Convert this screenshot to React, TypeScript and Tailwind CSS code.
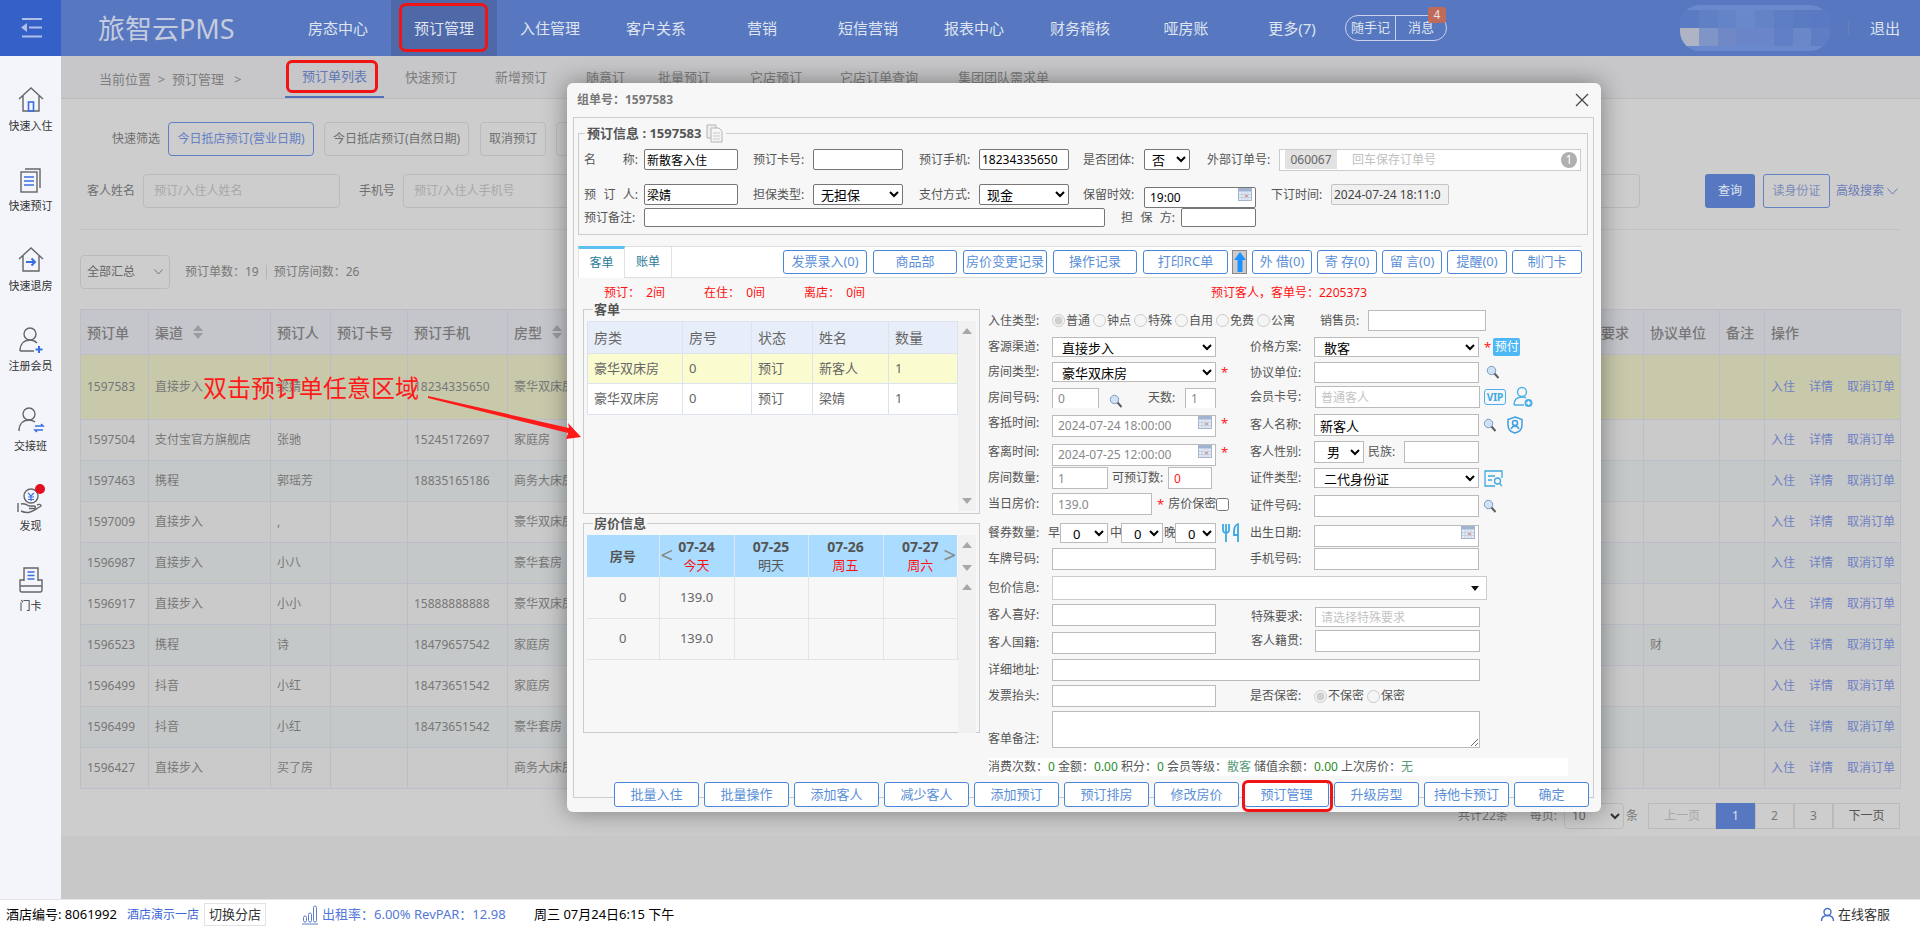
import React from "react";

const FONT = '"Noto Sans", "Noto Sans CJK SC", sans-serif';

const navItems = ["房态中心", "预订管理", "入住管理", "客户关系", "营销", "短信营销", "报表中心", "财务稽核", "哑房账", "更多(7)"];

const rows = [
  ["1597583", "直接步入", "梁婧", "", "18234335650", "豪华双床房", ""],
  ["1597504", "支付宝官方旗舰店", "张驰", "", "15245172697", "家庭房", ""],
  ["1597463", "携程", "郭瑶芳", "", "18835165186", "商务大床房", ""],
  ["1597009", "直接步入", ",", "", "", "豪华双床房", ""],
  ["1596987", "直接步入", "小八", "", "", "豪华套房", ""],
  ["1596917", "直接步入", "小小", "", "15888888888", "豪华双床房", ""],
  ["1596523", "携程", "诗", "", "18479657542", "家庭房", "财"],
  ["1596499", "抖音", "小红", "", "18473651542", "家庭房", ""],
  ["1596499", "抖音", "小红", "", "18473651542", "豪华套房", ""],
  ["1596427", "直接步入", "买了房", "", "", "商务大床房", ""],
];

const topInput = "min-w-0 h-full border border-[#767676] rounded-[2px] bg-white px-[2px] text-[12px] text-black outline-none";
const topSelect = "h-full border border-[#767676] rounded-[2px] bg-white pl-[3px] text-[13px] text-black";
const formInput = "min-w-0 h-full border border-[#bbbbbb] bg-white px-[5px] text-[12px] text-[#888888] outline-none placeholder:text-[#c4c4c4]";
const formSelect = "h-full border border-[#bbbbbb] bg-white pl-[5px] text-[13px] text-black";
const blueBtn = "flex items-center justify-center h-full border border-[#4a86d8] rounded-[3px] bg-white text-[13px] text-[#5a8fd8] whitespace-nowrap";

const Lbl = ({ t, c }: { t: string; c: string }) => (
  <span className={`flex justify-between shrink-0 whitespace-nowrap text-[12px] text-[#555555] ${c}`}>
    {t.split(" ").map((p, i) => (
      <span key={i}>{p}</span>
    ))}
  </span>
);

const Star = () => <span className="ml-[5px] text-[13px] leading-none text-[#ff2020]">*</span>;

const Calendar = () => (
  <svg width="14" height="13" viewBox="0 0 14 13" className="absolute right-[4px] top-[4px]">
    <rect x="0.5" y="0.5" width="13" height="12" fill="#e6ecf5" stroke="#a8b6cc" />
    <rect x="0.5" y="0.5" width="13" height="3" fill="#9fb2d0" />
    <path d="M1 6.5h12M1 9.5h12M4 4v8M7 4v8M10 4v8" stroke="#c3cfe0" />
    <rect x="7" y="7" width="3" height="2" fill="#d9a0a0" />
  </svg>
);

const Search = ({ c = "" }: { c?: string }) => (
  <svg width="14" height="15" viewBox="0 0 14 15" className={`shrink-0 ${c}`}>
    <circle cx="5.5" cy="5.5" r="4.2" fill="#cfe2f5" stroke="#7d9cc4" />
    <path d="M8.5 8.5 12.5 13" stroke="#5c5c5c" strokeWidth="2" />
  </svg>
);

const Tri = ({ up }: { up?: boolean }) => (
  <svg width="10" height="6" viewBox="0 0 10 6">
    <path d={up ? "M0 6 5 0l5 6z" : "M0 0l5 6 5-6z"} fill="#a8a8a8" />
  </svg>
);

const Sort = () => (
  <svg width="10" height="14" viewBox="0 0 10 14" className="ml-[10px]">
    <path d="M0 6 5 0l5 6zM0 8l5 6 5-6z" fill="#9a9aa0" />
  </svg>
);

const Radios = ({ items, c }: { items: { t: string; on?: boolean }[]; c: string }) => (
  <div className={`flex items-center ${c}`}>
    {items.map((r) => (
      <label key={r.t} className="flex items-center w-[41px] text-[12px] text-[#555555] whitespace-nowrap">
        <input type="radio" disabled defaultChecked={r.on} name={r.t} className="shrink-0 mr-[1px]" />
        {r.t}
      </label>
    ))}
  </div>
);

const sideIcons = [
  <svg key="a" width="30" height="30" viewBox="0 0 30 30" fill="none" stroke="#666" strokeWidth="1.4">
    <path d="M3 14 15 3l12 11M7 11v15h16V11" />
    <rect x="12.5" y="17" width="5" height="9" stroke="#3a6fe0" strokeWidth="1.6" />
  </svg>,
  <svg key="b" width="30" height="30" viewBox="0 0 30 30" fill="none" stroke="#666" strokeWidth="1.4">
    <path d="M9 4h15v19" />
    <rect x="5" y="7" width="16" height="20" />
    <path d="M8 12h10M8 16h10M8 20h10" stroke="#3a6fe0" strokeWidth="1.6" />
  </svg>,
  <svg key="c" width="30" height="30" viewBox="0 0 30 30" fill="none" stroke="#666" strokeWidth="1.4">
    <path d="M3 14 15 3l12 11M7 11v15h16V11" />
    <path d="M10 17h9M15.5 13.5 19 17l-3.500 3.500" stroke="#3a6fe0" strokeWidth="2" />
  </svg>,
  <svg key="d" width="32" height="30" viewBox="0 0 32 30" fill="none" stroke="#666" strokeWidth="1.4">
    <circle cx="15" cy="9" r="6" />
    <path d="M5 26c0-7 4-11 10-11 3 0 5 1 7 3M5 26h14" />
    <path d="M24 21v7M20.500 24.500h7" stroke="#3a6fe0" strokeWidth="2" />
  </svg>,
  <svg key="e" width="32" height="30" viewBox="0 0 32 30" fill="none" stroke="#666" strokeWidth="1.4">
    <circle cx="14" cy="9" r="6" />
    <path d="M4 26c0-7 4-11 10-11 2 0 4 .5 6 2" />
    <path d="M20 21h8l-2-2M28 25h-8l2 2" stroke="#3a6fe0" strokeWidth="1.6" />
  </svg>,
  <svg key="f" width="32" height="32" viewBox="0 0 32 32" fill="none" stroke="#666" strokeWidth="1.4">
    <circle cx="16" cy="12" r="7" />
    <path d="M13 9l3 3 3-3M16 12v5M13 13h6M13 15.500h6" stroke="#3a6fe0" strokeWidth="1.2" />
    <path d="M3 19v9M6 20c3-1 5 0 8 2h5c2 0 2 2.500 0 2.500h-5M6 27c6 3 10 2 20-5 0-2-2-2-4-1" />
    <circle cx="25" cy="5" r="5" fill="#e01020" stroke="none" />
  </svg>,
  <svg key="g" width="30" height="30" viewBox="0 0 30 30" fill="none" stroke="#666" strokeWidth="1.4">
    <path d="M8 16V3h14v13" />
    <path d="M11.500 7h7M11.500 10.500h7M11.500 14h7" stroke="#3a6fe0" strokeWidth="1.6" />
    <path d="M8 15H4v10a2 2 0 0 0 2 2h18a2 2 0 0 0 2-2V15h-4M4 21h22" />
  </svg>,
];

const sideLabels = ["快速入住", "快速预订", "快速退房", "注册会员", "交接班", "发现", "门卡"];

const tiles = ["#5a7bc3", "#5f80c4", "#6484c8", "#6888c9", "#6383c6", "#5d7ec5", "#5a7bc2", "#597ac2",
  "#aeb4c4", "#7f95c8", "#7089c6", "#6b86c8", "#6a86c9", "#607fc6", "#6a88c8", "#5e7dc4"];

export default function App() {
  return (
    <div className="relative flex flex-col h-[929px] w-[1920px] overflow-hidden bg-white" style={{ fontFamily: FONT }}>
      {/* header */}
      <header className="flex items-center h-[56px] shrink-0 bg-[#5778c0]">
        <div className="flex items-center justify-center w-[61px] h-full bg-[#3560c8]">
          <svg width="22" height="20" viewBox="0 0 22 20" fill="none">
            <path d="M2 1h20M9 9.500h13M2 18.500h20" stroke="#aebfe6" strokeWidth="2" />
            <path d="M7 5v9L1 9.500z" fill="#aebfe6" />
          </svg>
        </div>
        <div className="w-[224px] pl-[37px] text-[27px] leading-none text-[#c4cbde] whitespace-nowrap">旅智云PMS</div>
        <nav className="flex h-full">
          {navItems.map((n) => (
            <div
              key={n}
              className={`flex items-center justify-center w-[106px] h-full text-[15px] text-[#dfe4ef] ${n === "预订管理" ? "bg-[#4f68a8]" : ""}`}
            >
              {n}
            </div>
          ))}
        </nav>
        <div className="relative flex items-center h-[26px] w-[102px] border border-[#c8d2ea] rounded-[13px] text-[13px] text-[#dfe4ef]">
          <span className="flex items-center justify-center w-[50px] h-full border-r border-[#c8d2ea]">随手记</span>
          <span className="flex items-center justify-center flex-1">消息</span>
          <span className="absolute right-[0px] top-[-9px] flex items-center justify-center w-[18px] h-[16px] rounded-[3px] bg-[#c06a5a] text-[12px] leading-none text-[#e4e4e4]">4</span>
        </div>
        <div className="ml-[233px] grid grid-cols-8 w-[150px] h-[46px] overflow-hidden rounded-[20px] bg-[#6a88cc] content-center">
          {tiles.map((t, i) => (
            <div key={i} className="h-[18px]" style={{ backgroundColor: t }} />
          ))}
        </div>
        <div className="ml-[18px] w-[1px] h-[14px] bg-[#6a7fb4]" />
        <div className="ml-[21px] text-[15px] text-[#dfe4ef]">退出</div>
      </header>

      <div className="flex flex-1 min-h-0">
        {/* sidebar */}
        <aside className="flex flex-col items-center w-[61px] shrink-0 pt-[30px] bg-[#f3f5fa]">
          {sideLabels.map((s, i) => (
            <div key={s} className="flex flex-col items-center h-[80px]">
              <div className="flex items-center justify-center h-[28px]">{sideIcons[i]}</div>
              <div className="mt-[4px] text-[11px] leading-[16px] text-[#333333] whitespace-nowrap">{s}</div>
            </div>
          ))}
        </aside>

        {/* dimmed page under the dialog */}
        <main className="flex flex-col flex-1 min-w-0 bg-[#cdcdcd]">
          <div className="flex items-center h-[43px] shrink-0 border-b border-[#bcbcbc] bg-[#c7c7c9] text-[13px] text-[#7d7d7d]">
            <span className="ml-[38px] mt-[6px] w-[186px] whitespace-pre">当前位置  &gt;  预订管理   &gt;</span>
            <span className="relative flex items-center justify-center w-[99px] h-full pt-[2px] border-b-2 border-[#5470b8] text-[#5f78b8]">
              预订单列表
              <span className="absolute left-[1px] top-[4px] w-[92px] h-[33px] border-[3px] border-[#f01414] rounded-[6px]" />
            </span>
            <span className="ml-[21px] mt-[2px]">快速预订</span>
            <span className="ml-[38px] mt-[2px]">新增预订</span>
            <span className="ml-[39px] mt-[2px]">随意订</span>
            <span className="ml-[33px] mt-[2px]">批量预订</span>
            <span className="ml-[40px] mt-[2px]">它店预订</span>
            <span className="ml-[38px] mt-[2px]">它店订单查询</span>
            <span className="ml-[40px] mt-[2px]">集团团队需求单</span>
          </div>

          <div className="flex flex-col flex-1 min-h-0 pl-[19px] pr-[20px]">
            <div className="flex items-center h-[34px] mt-[23px] text-[12px] text-[#6f6f6f] shrink-0">
              <span className="ml-[32px] w-[56px]">快速筛选</span>
              <span className="flex items-center justify-center w-[146px] h-full border border-[#5f7fc4] rounded-[4px] text-[#6480c4]">今日抵店预订(营业日期)</span>
              <span className="flex items-center justify-center w-[145px] h-full ml-[10px] border border-[#bbbbbb] rounded-[4px]">今日抵店预订(自然日期)</span>
              <span className="flex items-center justify-center w-[66px] h-full ml-[11px] border border-[#bbbbbb] rounded-[4px]">取消预订</span>
              <span className="w-[66px] h-full ml-[10px] border border-[#bbbbbb] rounded-[4px]" />
            </div>

            <div className="flex items-center h-[34px] mt-[18px] text-[12px] text-[#6f6f6f] shrink-0">
              <span className="ml-[7px] w-[56px]">客人姓名</span>
              <span className="flex items-center w-[197px] h-full pl-[10px] border border-[#bbbbbb] rounded-[4px] text-[#a8a8a8]">预订/入住人姓名</span>
              <span className="ml-[19px] w-[44px]">手机号</span>
              <span className="flex items-center w-[1237px] h-full pl-[10px] border border-[#bbbbbb] rounded-[4px] text-[#a8a8a8]">预订/入住人手机号</span>
              <span className="flex items-center justify-center w-[50px] h-full ml-[65px] rounded-[3px] bg-[#5778c0] text-[#dfe4ef]">查询</span>
              <span className="flex items-center justify-center w-[67px] h-full ml-[8px] border border-[#6482c4] rounded-[3px] text-[#7a8cb8]">读身份证</span>
              <span className="ml-[6px] whitespace-nowrap text-[#6a7cb4]">高级搜索</span>
              <svg width="11" height="7" viewBox="0 0 11 7" fill="none" className="ml-[3px]">
                <path d="M.5.500 5.500 6l5-5.500" stroke="#6a7cb4" />
              </svg>
            </div>

            <div className="h-[1px] mt-[21px] bg-[#c2c2c2] shrink-0" />

            <div className="flex items-center h-[34px] mt-[25px] text-[12px] text-[#777777] shrink-0">
              <span className="flex items-center justify-between w-[90px] h-full px-[6px] border border-[#bbbbbb] rounded-[4px] text-[#666666]">
                全部汇总
                <svg width="9" height="6" viewBox="0 0 9 6" fill="none">
                  <path d="M.5.500 4.500 5l4-4.500" stroke="#777" />
                </svg>
              </span>
              <span className="ml-[15px]">预订单数：19</span>
              <span className="mx-[7px] h-[14px] w-[1px] bg-[#b5b5b5]" />
              <span>预订房间数：26</span>
            </div>

            <table className="mt-[20px] w-[1820px] table-fixed border-collapse text-[12px] text-[#777777] shrink-0">
              <colgroup>
                <col className="w-[68px]" />
                <col className="w-[122px]" />
                <col className="w-[60px]" />
                <col className="w-[77px]" />
                <col className="w-[100px]" />
                <col className="w-[113px]" />
                <col className="w-[950px]" />
                <col className="w-[73px]" />
                <col className="w-[76px]" />
                <col className="w-[45px]" />
                <col className="w-[136px]" />
              </colgroup>
              <thead>
                <tr className="h-[45px] bg-[#c5c6cb] text-[14px] font-medium text-left">
                  <th className="border border-[#bcbdc8] pl-[6px] font-medium">预订单</th>
                  <th className="border border-[#bcbdc8] pl-[6px] font-medium"><span className="flex items-center">渠道<Sort /></span></th>
                  <th className="border border-[#bcbdc8] pl-[6px] font-medium">预订人</th>
                  <th className="border border-[#bcbdc8] pl-[6px] font-medium">预订卡号</th>
                  <th className="border border-[#bcbdc8] pl-[6px] font-medium">预订手机</th>
                  <th className="border border-[#bcbdc8] pl-[6px] font-medium"><span className="flex items-center">房型<Sort /></span></th>
                  <th className="border border-[#bcbdc8]" />
                  <th className="border border-[#bcbdc8] pl-[2px] font-medium">特殊要求</th>
                  <th className="border border-[#bcbdc8] pl-[6px] font-medium">协议单位</th>
                  <th className="border border-[#bcbdc8] pl-[6px] font-medium">备注</th>
                  <th className="border border-[#bcbdc8] pl-[6px] font-medium">操作</th>
                </tr>
              </thead>
              <tbody>
                {rows.map((r, i) => (
                  <tr
                    key={i}
                    className={i === 0 ? "h-[65px] bg-[#c8c9ab]" : i % 2 === 0 ? "h-[41px] bg-[#c4c8c8]" : "h-[41px] bg-[#cbcaca]"}
                  >
                    {r.slice(0, 6).map((c, j) => (
                      <td key={j} className="border border-[#bcbdc8] pl-[6px] whitespace-nowrap overflow-hidden">{c}</td>
                    ))}
                    <td className="border border-[#bcbdc8]" />
                    <td className="border border-[#bcbdc8]" />
                    <td className="border border-[#bcbdc8] pl-[6px]">{r[6]}</td>
                    <td className="border border-[#bcbdc8]" />
                    <td className="border border-[#bcbdc8] pl-[6px] text-[#6f80c4]">
                      <span className="flex gap-[14px] whitespace-nowrap">
                        <span>入住</span>
                        <span>详情</span>
                        <span>取消订单</span>
                      </span>
                    </td>
                  </tr>
                ))}
              </tbody>
            </table>

            <div className="flex items-center justify-end h-[26px] mt-[14px] text-[12px] text-[#777777] shrink-0">
              <span className="mr-[22px]">共计22条</span>
              <span className="mr-[7px]">每页:</span>
              <span className="flex items-center justify-between w-[60px] h-full pl-[7px] pr-[3px] border border-[#bbbbbb] rounded-[3px] text-[#666666]">
                10
                <svg width="10" height="7" viewBox="0 0 10 7" fill="none">
                  <path d="M1 1l4 4 4-4" stroke="#333" strokeWidth="2" />
                </svg>
              </span>
              <span className="ml-[2px] mr-[10px]">条</span>
              <span className="flex items-center justify-center w-[68px] h-full border border-[#bbbbbb] text-[#a8a8a8]">上一页</span>
              <span className="flex items-center justify-center w-[39px] h-full bg-[#5778c0] text-[#dfe4ef]">1</span>
              <span className="flex items-center justify-center w-[39px] h-full border border-[#bbbbbb]">2</span>
              <span className="flex items-center justify-center w-[39px] h-full border border-[#bbbbbb]">3</span>
              <span className="flex items-center justify-center w-[67px] h-full border border-[#bbbbbb] text-[#555555]">下一页</span>
            </div>
          </div>
          <div className="h-[63px] shrink-0 bg-[#c8c8c8]" />
        </main>
      </div>

      {/* footer */}
      <footer className="flex items-center h-[30px] shrink-0 border-t border-[#e4e4e4] bg-white pl-[6px] text-[13px] text-black">
        <span className="w-[121px] whitespace-nowrap">酒店编号: 8061992</span>
        <span className="w-[77px] whitespace-nowrap text-[12px] text-[#3f66d8]">酒店演示一店</span>
        <span className="flex items-center justify-center w-[62px] h-[23px] border border-[#e2e2e2] text-[#333333]">切换分店</span>
        <svg width="16" height="20" viewBox="0 0 16 20" fill="none" stroke="#5b7fc8" className="ml-[36px]">
          <rect x="1.500" y="11" width="3" height="6" rx="1.500" />
          <rect x="6.500" y="8" width="3" height="9" rx="1.500" />
          <rect x="11.500" y="1" width="3" height="16" rx="1.500" />
          <path d="M0 19h16" />
        </svg>
        <span className="ml-[4px] w-[212px] whitespace-nowrap text-[#5578d8]">出租率：6.00% RevPAR：12.98</span>
        <span className="whitespace-nowrap">周三 07月24日6:15 下午</span>
        <span className="ml-auto mr-[30px] flex items-center gap-[3px] text-[#333333]">
          <svg width="15" height="15" viewBox="0 0 15 15" fill="none" stroke="#4a6fc8" strokeWidth="1.400">
            <circle cx="7.500" cy="5" r="3.500" />
            <path d="M1.500 14c0-3.500 2.500-5.500 6-5.500s6 2 6 5.500" />
          </svg>
          在线客服
        </span>
      </footer>

      {/* annotation on the list */}
      <div className="absolute left-[203px] top-[372px] text-[24px] leading-[32px] text-[#ff1a1a] whitespace-nowrap z-20">双击预订单任意区域</div>

      {/* reservation dialog */}
      <section className="absolute left-[567px] top-[83px] z-10 flex flex-col w-[1034px] h-[729px] rounded-[6px] bg-[#f7f7f7] shadow-[0_0_24px_rgba(0,0,0,0.4)]">
        <div className="flex items-center justify-between h-[34px] shrink-0 pl-[10px] pr-[12px] text-[12px] font-bold text-[#777777]">
          <span>组单号：1597583</span>
          <svg width="14" height="14" viewBox="0 0 14 14" fill="none" stroke="#444" strokeWidth="1.200">
            <path d="M1 1l12 12M13 1 1 13" />
          </svg>
        </div>

        <div className="flex flex-col ml-[6px] w-[1021px] h-[681px] shrink-0 border border-[#cccccc]">
          <fieldset className="ml-[4px] mt-[7px] w-[1010px] h-[110px] shrink-0 border border-[#cccccc] pl-[5px]">
            <legend className="flex items-center ml-[1px] px-[2px] h-[16px] text-[13px] font-bold leading-[16px] text-[#555555]">
              预订信息 : 1597583
              <svg width="18" height="19" viewBox="0 0 18 19" fill="none" stroke="#b5b5b5" className="ml-[5px]">
                <path d="M1 1h9v13H1z" fill="#eeeeee" />
                <path d="M5 4h8l3 3v11H5z" fill="#f5f5f5" />
                <path d="M7 9h7M7 12h7M7 15h7" stroke="#c9c9c9" />
              </svg>
            </legend>

            <div className="flex items-center h-[21px] mt-[8px]">
              <Lbl t="名 称:" c="w-[54px]" />
              <input defaultValue="新散客入住" className={`${topInput} ml-[6px] w-[94px]`} />
              <Lbl t="预订卡号:" c="ml-[15px] w-[54px]" />
              <input className={`${topInput} ml-[6px] w-[90px]`} />
              <Lbl t="预订手机:" c="ml-[16px] w-[54px]" />
              <input defaultValue="18234335650" className={`${topInput} ml-[6px] w-[90px]`} />
              <Lbl t="是否团体:" c="ml-[14px] w-[54px]" />
              <select className={`${topSelect} ml-[7px] w-[46px]`} defaultValue="否">
                <option>否</option>
              </select>
              <Lbl t="外部订单号:" c="ml-[17px] w-[66px]" />
              <div className="flex items-center relative ml-[6px] w-[302px] h-[22px] border border-[#cccccc] bg-white pl-[5px] text-[12px]">
                <span className="flex items-center justify-center w-[52px] h-[19px] bg-[#e2e2e2] text-[#666666]">060067</span>
                <span className="ml-[15px] text-[#c0c0c0]">回车保存订单号</span>
                <span className="absolute right-[3px] top-[2px] flex items-center justify-center w-[16px] h-[16px] rounded-full bg-[#b0b0b0] text-white">1</span>
              </div>
            </div>

            <div className="flex items-center h-[21px] mt-[14px]">
              <Lbl t="预 订 人:" c="w-[54px]" />
              <input defaultValue="梁婧" className={`${topInput} ml-[6px] w-[94px]`} />
              <Lbl t="担保类型:" c="ml-[15px] w-[54px]" />
              <select className={`${topSelect} ml-[6px] w-[90px]`} defaultValue="无担保">
                <option>无担保</option>
              </select>
              <Lbl t="支付方式:" c="ml-[16px] w-[54px]" />
              <select className={`${topSelect} ml-[6px] w-[90px]`} defaultValue="现金">
                <option>现金</option>
              </select>
              <Lbl t="保留时效:" c="ml-[14px] w-[54px]" />
              <div className="relative ml-[7px] w-[112px] h-full">
                <input defaultValue="19:00" className={`${topInput} w-full px-[5px]`} />
                <Calendar />
              </div>
              <Lbl t="下订时间:" c="ml-[15px] w-[54px]" />
              <input defaultValue="2024-07-24 18:11:0" className="ml-[6px] w-[118px] h-full min-w-0 border border-[#c4c4c4] rounded-[2px] bg-[#f0f0f0] px-[2px] text-[12px] text-[#444444] outline-none" />
            </div>

            <div className="flex items-center h-[19px] mt-[3px]">
              <Lbl t="预订备注:" c="w-[54px]" />
              <input className={`${topInput} ml-[6px] w-[461px]`} />
              <Lbl t="担 保 方:" c="ml-[16px] w-[54px]" />
              <input className={`${topInput} ml-[6px] w-[75px]`} />
            </div>
          </fieldset>

          {/* tabs and actions */}
          <div className="flex items-center ml-[4px] mt-[11px] w-[1004px] h-[32px] shrink-0 border-y border-[#dddddd] bg-white">
            <span className="flex items-center justify-center w-[47px] h-[32px] border-t-[3px] border-[#5bc0f0] border-x border-x-[#e2e2e2] bg-white text-[12px] text-[#2a7a9a] -mt-[1px]">客单</span>
            <span className="flex items-center justify-center w-[47px] h-full border-r border-[#e2e2e2] text-[12px] text-[#2a7a9a]">账单</span>
            <div className="flex items-center h-[24px] ml-[111px]">
              <span className={`${blueBtn} w-[84px]`}>发票录入(0)</span>
              <span className={`${blueBtn} w-[84px] ml-[6px]`}>商品部</span>
              <span className={`${blueBtn} w-[84px] ml-[6px]`}>房价变更记录</span>
              <span className={`${blueBtn} w-[84px] ml-[6px]`}>操作记录</span>
              <span className={`${blueBtn} w-[85px] ml-[6px]`}>打印RC单</span>
              <span className="flex items-center justify-center w-[15px] h-full ml-[4px] border border-[#888888] bg-[#cccccc]">
                <svg width="12" height="20" viewBox="0 0 12 20">
                  <path d="M6 0l6 8H8.500v12h-5V8H0z" fill="#1e90ff" />
                </svg>
              </span>
              <span className={`${blueBtn} w-[60px] ml-[5px]`}>外 借(0)</span>
              <span className={`${blueBtn} w-[60px] ml-[5px]`}>寄 存(0)</span>
              <span className={`${blueBtn} w-[60px] ml-[5px]`}>留 言(0)</span>
              <span className={`${blueBtn} w-[60px] ml-[5px]`}>提醒(0)</span>
              <span className={`${blueBtn} w-[70px] ml-[5px]`}>制门卡</span>
            </div>
          </div>

          <div className="flex h-[23px] shrink-0 pl-[30px] pt-[7px] text-[12px] leading-[16px] text-[#ff1010] whitespace-pre">
            <span className="w-[100px]">预订：  2间</span>
            <span className="w-[100px]">在住：  0间</span>
            <span className="w-[407px]">离店：  0间</span>
            <span>预订客人，客单号：2205373</span>
          </div>

          <div className="flex flex-1 min-h-0">
            {/* left column */}
            <div className="flex flex-col ml-[9px] w-[396px] shrink-0">
              <fieldset className="flex h-[213px] border border-[#cccccc] pl-[3px] pr-[3px]">
                <legend className="ml-[6px] px-[1px] h-[16px] text-[13px] font-bold leading-[16px] text-[#555555]">客单</legend>
                <div className="flex mt-[4px]">
                  <table className="w-[370px] h-[93px] self-start table-fixed border-collapse text-[13px] text-[#666666]">
                    <colgroup>
                      <col className="w-[95px]" />
                      <col className="w-[69px]" />
                      <col className="w-[61px]" />
                      <col className="w-[76px]" />
                      <col className="w-[69px]" />
                    </colgroup>
                    <thead>
                      <tr className="h-[32px] bg-[#e8eef9] text-left text-[14px]">
                        {["房类", "房号", "状态", "姓名", "数量"].map((h) => (
                          <th key={h} className="border border-[#dde3ee] pl-[6px] font-normal">{h}</th>
                        ))}
                      </tr>
                    </thead>
                    <tbody>
                      <tr className="h-[30px] bg-[#fbfbd0]">
                        {["豪华双床房", "0", "预订", "新客人", "1"].map((c, i) => (
                          <td key={i} className="border border-[#dde3ee] pl-[6px]">{c}</td>
                        ))}
                      </tr>
                      <tr className="h-[31px] bg-white">
                        {["豪华双床房", "0", "预订", "梁婧", "1"].map((c, i) => (
                          <td key={i} className="border border-[#dde3ee] pl-[6px]">{c}</td>
                        ))}
                      </tr>
                    </tbody>
                  </table>
                  <div className="flex flex-col items-center justify-between w-[18px] h-[190px] py-[7px] bg-[#f1f1f1]">
                    <Tri up />
                    <Tri />
                  </div>
                </div>
              </fieldset>

              <fieldset className="flex mt-[1px] h-[218px] border border-[#cccccc] pl-[3px] pr-[3px]">
                <legend className="ml-[6px] px-[1px] h-[16px] text-[13px] font-bold leading-[16px] text-[#555555]">房价信息</legend>
                <div className="flex mt-[4px]">
                  <table className="w-[370px] h-[123px] self-start table-fixed border-collapse text-[13px] text-[#666666] text-center">
                    <colgroup>
                      <col className="w-[72px]" />
                      <col className="w-[75px]" />
                      <col className="w-[74px]" />
                      <col className="w-[75px]" />
                      <col className="w-[74px]" />
                    </colgroup>
                    <thead>
                      <tr className="h-[42px] bg-[#aadcff] leading-[18px]">
                        <th className="border-r border-[#dfe6ee] text-[#555555]">房号</th>
                        <th className="relative border-r border-[#dfe6ee]">
                          <span className="absolute left-[1px] top-[8px] text-[22px] font-normal leading-none text-[#888888]">&lt;</span>
                          <div className="text-[14px] font-bold text-[#555555]">07-24</div>
                          <div className="font-normal text-[#ff1010]">今天</div>
                        </th>
                        <th className="border-r border-[#dfe6ee]">
                          <div className="text-[14px] font-bold text-[#555555]">07-25</div>
                          <div className="font-normal text-[#555555]">明天</div>
                        </th>
                        <th className="border-r border-[#dfe6ee]">
                          <div className="text-[14px] font-bold text-[#555555]">07-26</div>
                          <div className="font-normal text-[#ff1010]">周五</div>
                        </th>
                        <th className="relative">
                          <div className="text-[14px] font-bold text-[#555555]">07-27</div>
                          <div className="font-normal text-[#ff1010]">周六</div>
                          <span className="absolute right-[1px] top-[8px] text-[22px] font-normal leading-none text-[#888888]">&gt;</span>
                        </th>
                      </tr>
                    </thead>
                    <tbody>
                      {[0, 1].map((i) => (
                        <tr key={i} className="h-[41px]">
                          <td className="border-r border-b border-[#e4e4e4]">0</td>
                          <td className="border-r border-b border-[#e4e4e4]">139.0</td>
                          <td className="border-r border-b border-[#e4e4e4]" />
                          <td className="border-r border-b border-[#e4e4e4]" />
                          <td className="border-r border-b border-[#e4e4e4]" />
                        </tr>
                      ))}
                    </tbody>
                  </table>
                  <div className="flex flex-col items-center w-[18px] h-[198px] bg-[#f1f1f1]">
                    <div className="mt-[7px]"><Tri up /></div>
                    <div className="mt-[17px]"><Tri /></div>
                    <div className="mt-[13px]"><Tri up /></div>
                  </div>
                </div>
              </fieldset>
            </div>

            {/* right column */}
            <div className="flex flex-col ml-[9px] w-[580px] shrink-0">
              <div className="flex items-center h-[21px] mt-[9px]">
                <Lbl t="入住类型:" c="w-[64px]" />
                <Radios
                  c="w-[268px]"
                  items={[{ t: "普通", on: true }, { t: "钟点" }, { t: "特殊" }, { t: "自用" }, { t: "免费" }, { t: "公寓" }]}
                />
                <Lbl t="销售员:" c="w-[48px]" />
                <input className={`${formInput} w-[118px]`} />
              </div>

              <div className="flex mt-[6px]">
                <div className="flex flex-col w-[262px] shrink-0">
                  <div className="flex items-center h-[20px]">
                    <Lbl t="客源渠道:" c="w-[64px]" />
                    <select className={`${formSelect} w-[164px]`} defaultValue="直接步入"><option>直接步入</option></select>
                  </div>
                  <div className="flex items-center h-[20px] mt-[5px]">
                    <Lbl t="房间类型:" c="w-[64px]" />
                    <select className={`${formSelect} w-[164px]`} defaultValue="豪华双床房"><option>豪华双床房</option></select>
                    <Star />
                  </div>
                  <div className="flex items-center h-[20px] mt-[6px]">
                    <Lbl t="房间号码:" c="w-[64px]" />
                    <input defaultValue="0" className={`${formInput} w-[47px] border-b-0`} />
                    <Search c="ml-[10px] mt-[6px]" />
                    <Lbl t="天数:" c="ml-[25px] w-[37px]" />
                    <input defaultValue="1" className={`${formInput} w-[31px] border-b-0`} />
                  </div>
                  <div className="flex items-center h-[22px] mt-[4px]">
                    <Lbl t="客抵时间:" c="w-[64px]" />
                    <div className="relative w-[164px] h-full">
                      <input defaultValue="2024-07-24 18:00:00" className={`${formInput} w-full bg-[#f7f7f7] border-[#999999]`} />
                      <Calendar />
                    </div>
                    <Star />
                  </div>
                  <div className="flex items-center h-[22px] mt-[7px]">
                    <Lbl t="客离时间:" c="w-[64px]" />
                    <div className="relative w-[164px] h-full">
                      <input defaultValue="2024-07-25 12:00:00" className={`${formInput} w-full bg-[#f7f7f7] border-[#999999]`} />
                      <Calendar />
                    </div>
                    <Star />
                  </div>
                  <div className="flex items-center h-[22px] mt-[4px]">
                    <Lbl t="房间数量:" c="w-[64px]" />
                    <input defaultValue="1" className={`${formInput} w-[56px]`} />
                    <Lbl t="可预订数:" c="ml-[4px] w-[56px]" />
                    <input defaultValue="0" className={`${formInput} w-[44px] text-[#ff2020]`} />
                  </div>
                  <div className="flex items-center h-[22px] mt-[4px]">
                    <Lbl t="当日房价:" c="w-[64px]" />
                    <input defaultValue="139.0" className={`${formInput} w-[100px]`} />
                    <Star />
                    <Lbl t="房价保密" c="ml-[4px] w-[48px]" />
                    <input type="checkbox" className="shrink-0" />
                  </div>
                  <div className="flex items-center h-[20px] mt-[8px]">
                    <Lbl t="餐券数量:" c="w-[60px]" />
                    <Lbl t="早" c="w-[12px]" />
                    <select className={`${formSelect} w-[48px] pl-[8px] text-[#000080]`} defaultValue="0"><option>0</option></select>
                    <Lbl t="中" c="ml-[2px] w-[11px]" />
                    <select className={`${formSelect} w-[42px] pl-[8px] text-[#000080]`} defaultValue="0"><option>0</option></select>
                    <Lbl t="晚" c="ml-[1px] w-[11px]" />
                    <select className={`${formSelect} w-[41px] pl-[8px] text-[#000080]`} defaultValue="0"><option>0</option></select>
                    <svg width="18" height="20" viewBox="0 0 18 20" fill="none" stroke="#3fa8e0" strokeWidth="1.800" className="ml-[6px] shrink-0">
                      <path d="M1 1v6c0 2 2 3 3 3s3-1 3-3V1M4 1v18" />
                      <path d="M16 1c-3 1-4 4-4 8v3h4zM16 1v18" />
                    </svg>
                  </div>
                  <div className="flex items-center h-[22px] mt-[5px]">
                    <Lbl t="车牌号码:" c="w-[64px]" />
                    <input className={`${formInput} w-[164px]`} />
                  </div>
                </div>

                <div className="flex flex-col flex-1">
                  <div className="flex items-center h-[20px]">
                    <Lbl t="价格方案:" c="w-[64px]" />
                    <select className={`${formSelect} w-[165px]`} defaultValue="散客"><option>散客</option></select>
                    <Star />
                    <span className="ml-[2px] flex items-center justify-center w-[27px] h-[18px] rounded-[2px] bg-[#4db8f5] text-[12px] text-white">预付</span>
                  </div>
                  <div className="flex items-center h-[21px] mt-[5px]">
                    <Lbl t="协议单位:" c="w-[64px]" />
                    <input className={`${formInput} w-[165px]`} />
                    <Search c="ml-[7px]" />
                  </div>
                  <div className="flex items-center h-[22px] mt-[3px]">
                    <Lbl t="会员卡号:" c="w-[65px]" />
                    <input placeholder="普通客人" className={`${formInput} w-[165px] bg-[#f7f7f7] placeholder:text-[#999999]`} />
                    <span className="ml-[4px] flex items-center justify-center w-[22px] h-[16px] border border-[#4bb0e8] rounded-[3px] text-[10px] font-bold leading-none text-[#3fa8e0]">VIP</span>
                    <svg width="20" height="22" viewBox="0 0 20 22" fill="none" stroke="#4bb0e8" strokeWidth="1.400" className="ml-[7px]">
                      <circle cx="9" cy="6" r="4.500" />
                      <path d="M1 19c0-5 3-8 8-8 1.500 0 3 .3 4 1M1 19h10" />
                      <circle cx="15.500" cy="17" r="4" fill="#4bb0e8" stroke="none" />
                      <path d="M13.500 17h4M15.500 15v4" stroke="#fff" />
                    </svg>
                  </div>
                  <div className="flex items-center h-[22px] mt-[6px]">
                    <Lbl t="客人名称:" c="w-[64px]" />
                    <input defaultValue="新客人" className={`${formInput} w-[165px] text-[13px] text-black`} />
                    <Search c="ml-[4px]" />
                    <svg width="16" height="18" viewBox="0 0 16 18" fill="none" stroke="#3f9fe0" strokeWidth="1.500" className="ml-[10px]">
                      <path d="M8 1l7 2.500V9c0 4-3 7-7 8-4-1-7-4-7-8V3.500z" />
                      <circle cx="8" cy="7" r="2.500" />
                      <path d="M4 13c1-2 2-3 4-3s3 1 4 3" />
                    </svg>
                  </div>
                  <div className="flex items-center h-[22px] mt-[5px]">
                    <Lbl t="客人性别:" c="w-[64px]" />
                    <select className={`${formSelect} w-[50px] h-[20px] pl-[8px]`} defaultValue="男"><option>男</option></select>
                    <Lbl t="民族:" c="ml-[4px] w-[36px]" />
                    <input className={`${formInput} w-[75px]`} />
                  </div>
                  <div className="flex items-center h-[20px] mt-[5px]">
                    <Lbl t="证件类型:" c="w-[64px]" />
                    <select className={`${formSelect} w-[165px]`} defaultValue="二代身份证"><option>二代身份证</option></select>
                    <svg width="19" height="17" viewBox="0 0 19 17" fill="none" stroke="#3fa8e0" strokeWidth="1.300" className="ml-[5px]">
                      <path d="M18 8V1H1v15h10" />
                      <path d="M4 6h7M4 10h4" />
                      <circle cx="13.500" cy="11" r="3" />
                      <path d="M15.500 13.500 18 16" />
                    </svg>
                  </div>
                  <div className="flex items-center h-[22px] mt-[7px]">
                    <Lbl t="证件号码:" c="w-[64px]" />
                    <input className={`${formInput} w-[165px]`} />
                    <Search c="ml-[4px]" />
                  </div>
                  <div className="flex items-center h-[22px] mt-[5px]">
                    <Lbl t="出生日期:" c="w-[64px]" />
                    <div className="relative w-[165px] h-full">
                      <input className={`${formInput} w-full border-[#999999]`} />
                      <Calendar />
                    </div>
                  </div>
                  <div className="flex items-center h-[22px] mt-[4px]">
                    <Lbl t="手机号码:" c="w-[64px]" />
                    <input className={`${formInput} w-[165px]`} />
                  </div>
                </div>
              </div>

              <div className="flex items-center h-[24px] mt-[6px]">
                <Lbl t="包价信息:" c="w-[64px]" />
                <div className="flex items-center justify-end w-[435px] h-full border border-[#cccccc] bg-white pr-[7px]">
                  <svg width="8" height="5" viewBox="0 0 8 5"><path d="M0 0h8L4 5z" fill="#111" /></svg>
                </div>
              </div>

              <div className="flex mt-[4px]">
                <div className="flex flex-col w-[263px] shrink-0">
                  <div className="flex items-center h-[22px]">
                    <Lbl t="客人喜好:" c="w-[64px]" />
                    <input className={`${formInput} w-[164px]`} />
                  </div>
                  <div className="flex items-center h-[22px] mt-[6px]">
                    <Lbl t="客人国籍:" c="w-[64px]" />
                    <input className={`${formInput} w-[164px]`} />
                  </div>
                </div>
                <div className="flex flex-col">
                  <div className="flex items-center h-[20px] mt-[3px]">
                    <Lbl t="特殊要求:" c="w-[64px]" />
                    <input placeholder="请选择特殊要求" className={`${formInput} w-[165px]`} />
                  </div>
                  <div className="flex items-center h-[22px] mt-[3px]">
                    <Lbl t="客人籍贯:" c="w-[64px]" />
                    <input className={`${formInput} w-[165px]`} />
                  </div>
                </div>
              </div>

              <div className="flex items-center h-[22px] mt-[5px]">
                <Lbl t="详细地址:" c="w-[64px]" />
                <input className={`${formInput} w-[428px]`} />
              </div>

              <div className="flex items-center h-[22px] mt-[4px]">
                <Lbl t="发票抬头:" c="w-[64px]" />
                <input className={`${formInput} w-[164px]`} />
                <Lbl t="是否保密:" c="ml-[34px] w-[64px]" />
                <label className="flex items-center w-[53px] text-[12px] text-[#555555]">
                  <input type="radio" disabled defaultChecked name="secret" className="mr-[1px] shrink-0" />
                  不保密
                </label>
                <label className="flex items-center text-[12px] text-[#555555]">
                  <input type="radio" disabled name="secret2" className="mr-[1px] shrink-0" />
                  保密
                </label>
              </div>

              <div className="flex items-end h-[37px] mt-[4px]">
                <Lbl t="客单备注:" c="w-[64px]" />
                <textarea className="w-[428px] h-full border border-[#bbbbbb] bg-white outline-none" />
              </div>

              <div className="flex items-center h-[18px] mt-[10px] bg-white text-[12px] text-[#555555] whitespace-pre">
                消费次数：<b className="font-normal text-[#2a8a2a]">0</b> 金额：<b className="font-normal text-[#2a8a2a]">0.00</b> 积分：<b className="font-normal text-[#2a8a2a]">0</b> 会员等级：<b className="font-normal text-[#5a9a7a]">散客</b> 储值余额：<b className="font-normal text-[#2a8a2a]">0.00</b> 上次房价：<b className="font-normal text-[#5a9a7a]">无</b>
              </div>
            </div>
          </div>
        </div>

        <div className="flex h-[25px] mt-[-16px] ml-[47px] gap-[5px] shrink-0">
          {["批量入住", "批量操作", "添加客人", "减少客人", "添加预订", "预订排房", "修改房价", "预订管理", "升级房型", "持他卡预订"].map((b) => (
            <span key={b} className={`${blueBtn} relative w-[85px]`}>
              {b}
              {b === "预订管理" && (
                <span className="absolute left-[-3px] top-[-3px] w-[91px] h-[32px] border-[3px] border-[#f01414] rounded-[6px]" />
              )}
            </span>
          ))}
          <span className={`${blueBtn} w-[75px]`}>确定</span>
        </div>
      </section>

      {/* active-item ring in the top nav */}
      <div className="absolute left-[399px] top-[3px] z-20 w-[89px] h-[49px] border-[3px] border-[#f01414] rounded-[7px]" />

      {/* annotation arrow */}
      <svg width="170" height="55" viewBox="0 0 170 55" className="absolute left-[420px] top-[390px] z-20">
        <path d="M8 6 149 38l-1-5 13 14-15 2 2-6L8 8z" fill="#ff1a1a" />
      </svg>
    </div>
  );
}
